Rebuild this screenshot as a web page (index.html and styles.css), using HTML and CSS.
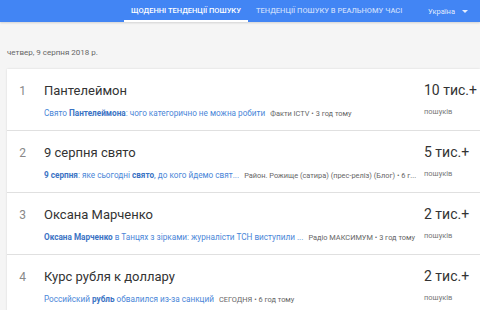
FILE: index.html
```html
<!DOCTYPE html>
<html>
  <head>
    <meta charset="UTF-8">
    <link rel="stylesheet" href="styles.css">
  </head>
  <body>
    <div class="header">
      <div class="tabs">
        <div class="tab active">ЩОДЕННІ ТЕНДЕНЦІЇ ПОШУКУ</div>
        <div class="tab">ТЕНДЕНЦІЇ ПОШУКУ В РЕАЛЬНОМУ ЧАСІ</div>
      </div>
      <div class="country">Україна <span class="caret"></span></div>
    </div>

    <div class="date">четвер, 9 серпня 2018 р.</div>

    <div class="card">
      <div class="row">
        <div class="num">1</div>
        <div class="main">
          <div class="title">Пантелеймон</div>
          <div class="sub"><span class="link">Свято <b>Пантелеймона</b>: чого категорично не можна робити</span><span class="src">Факти ICTV • 3 год тому</span></div>
        </div>
        <div class="count">
          <div class="value">10 тис.+</div>
          <div class="label">пошуків</div>
        </div>
      </div>
      <div class="row">
        <div class="num">2</div>
        <div class="main">
          <div class="title">9 серпня свято</div>
          <div class="sub"><span class="link"><b>9 серпня</b>: яке сьогодні <b>свято</b>, до кого йдемо свят...</span><span class="src">Район. Рожище (сатира) (прес-реліз) (Блог) • 6 г...</span></div>
        </div>
        <div class="count">
          <div class="value">5 тис.+</div>
          <div class="label">пошуків</div>
        </div>
      </div>
      <div class="row">
        <div class="num">3</div>
        <div class="main">
          <div class="title">Оксана Марченко</div>
          <div class="sub"><span class="link"><b>Оксана Марченко</b> в Танцях з зірками: журналісти ТСН виступили ...</span><span class="src">Радіо МАКСИМУМ • 3 год тому</span></div>
        </div>
        <div class="count">
          <div class="value">2 тис.+</div>
          <div class="label">пошуків</div>
        </div>
      </div>
      <div class="row">
        <div class="num">4</div>
        <div class="main">
          <div class="title">Курс рубля к доллару</div>
          <div class="sub"><span class="link">Российский <b>рубль</b> обвалился из-за санкций</span><span class="src">СЕГОДНЯ • 6 год тому</span></div>
        </div>
        <div class="count">
          <div class="value">2 тис.+</div>
          <div class="label">пошуків</div>
        </div>
      </div>
    </div>
  </body>
</html>
```

FILE: styles.css
```css
html {
  font-family: Roboto, "Noto Sans", sans-serif;
  width: 100%;
  height: 100%;
  margin: 0;
  padding: 0;
  overflow: hidden;
}
body {
  margin: 0;
  padding: 0;
  background: #f5f5f5;
  width: 100%;
  height: 100%;
  overflow: hidden;
}

.header {
  height: 22px;
  background: #4285f4;
  display: flex;
  align-items: stretch;
  box-shadow: 0 1px 2px rgba(0, 0, 0, 0.15);
}
.tabs {
  display: flex;
  margin-left: 124px;
}
.tab {
  display: flex;
  align-items: center;
  padding: 0 8px;
  font-size: 7.5px;
  font-weight: 500;
  color: rgba(255, 255, 255, 0.7);
  white-space: nowrap;
  box-sizing: border-box;
  border-bottom: 2px solid transparent;
}
.tab.active {
  color: #fff;
  border-bottom-color: #fff;
  width: 124px;
  justify-content: center;
}
.country {
  margin-left: auto;
  margin-right: 12px;
  display: flex;
  align-items: center;
  gap: 7px;
  font-size: 7.5px;
  color: rgba(255, 255, 255, 0.85);
}
.caret {
  width: 0;
  height: 0;
  border-left: 3px solid transparent;
  border-right: 3px solid transparent;
  border-top: 3px solid rgba(255, 255, 255, 0.85);
}

.date {
  padding: 26px 0 0 7px;
  font-size: 8px;
  color: #666;
  height: 21px;
}

.card {
  margin-left: 7px;
  background: #fff;
  box-shadow: 0 0 2px rgba(0, 0, 0, 0.12);
  overflow: hidden;
}
.row {
  display: flex;
  height: 62px;
  box-sizing: border-box;
  border-bottom: 1px solid #e0e0e0;
}
.num {
  width: 37px;
  flex-shrink: 0;
  padding-top: 15px;
  font-size: 12px;
  color: #888;
  text-align: center;
  box-sizing: border-box;
  padding-right: 6px;
}
.main {
  width: 380px;
  flex-shrink: 0;
  padding-top: 14px;
  overflow: hidden;
}
.title {
  font-size: 13px;
  color: #333;
  height: 17px;
}
.sub {
  margin-top: 8px;
  font-size: 8.2px;
  white-space: nowrap;
  display: flex;
  align-items: baseline;
  gap: 5px;
}
.link {
  color: #4a86d8;
}
.link b {
  font-weight: 700;
  color: #3b73c4;
}
.src {
  font-size: 7.4px;
  color: #666;
}
.count {
  flex-shrink: 0;
  padding-top: 13px;
  white-space: nowrap;
}
.value {
  font-size: 14px;
  color: #333;
  height: 18px;
}
.label {
  margin-top: 7px;
  font-size: 7.5px;
  color: #777;
}
```
